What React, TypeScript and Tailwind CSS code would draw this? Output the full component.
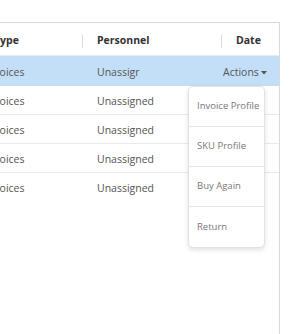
import React from "react";

const rows = [0, 1, 2, 3, 4];

export default function App() {
  return (
    <div
      className="relative w-[300px] h-[334px] bg-white overflow-hidden pt-[22px]"
      style={{ fontFamily: '"Open Sans", "Noto Sans", sans-serif' }}
    >
      <div className="w-[280px] h-[312px] border-t border-r border-[#d5dbe3]">
        {/* header */}
        <div className="flex items-center h-[33px] pt-[4px] border-b border-[#e6e9ee] text-[10.5px] font-bold text-[#333]">
          <div className="w-[83px] flex items-center justify-between">
            <span className="ml-[-6px]">Type</span>
            <span className="w-px h-[13px] bg-[#dcdcdc]" />
          </div>
          <div className="flex-1 flex items-center justify-between pl-[14px]">
            <span>Personnel</span>
            <span className="w-px h-[13px] bg-[#dcdcdc]" />
          </div>
          <div className="w-[57px] pl-[14px]">Date</div>
        </div>
        {rows.map((i) => (
          <div
            key={i}
            className={
              "flex items-center pt-[3px] text-[10.5px] text-[#555] " +
              (i === 0
                ? "h-[30px] bg-[#c3dff8]"
                : i === 4
                ? "h-[29px]"
                : "h-[29px] border-b border-[#e6e9ee]")
            }
          >
            <div className="w-[83px]">
              <span className="ml-[-15px]">Invoices</span>
            </div>
            <div className="flex-1 pl-[14px] overflow-hidden whitespace-nowrap">
              {i === 0 ? "Unassigr" : "Unassigned"}
            </div>
            <div className="w-[57px] flex items-center">
              {i === 0 && (
                <span className="flex items-center ml-[1px] whitespace-nowrap">
                  Actions
                  <svg width="6" height="4" viewBox="0 0 6 4" className="ml-[2px] mt-[1px]">
                    <path d="M0 0 L6 0 L3 3.5 Z" fill="#555" />
                  </svg>
                </span>
              )}
            </div>
          </div>
        ))}
      </div>

      {/* dropdown */}
      <div className="absolute left-[188px] top-[86px] w-[77px] bg-white border border-[#e2e2e2] rounded-[5px] shadow-[0_2px_5px_rgba(0,0,0,0.12)] text-[9.5px] text-[#777]">
        {["Invoice Profile", "SKU Profile", "Buy Again", "Return"].map((t, i) => (
          <div
            key={t}
            className={
              "h-[40px] flex items-center pl-[8px] whitespace-nowrap " +
              (i < 3 ? "border-b border-[#e6e6e6]" : "")
            }
          >
            {t}
          </div>
        ))}
      </div>
    </div>
  );
}
